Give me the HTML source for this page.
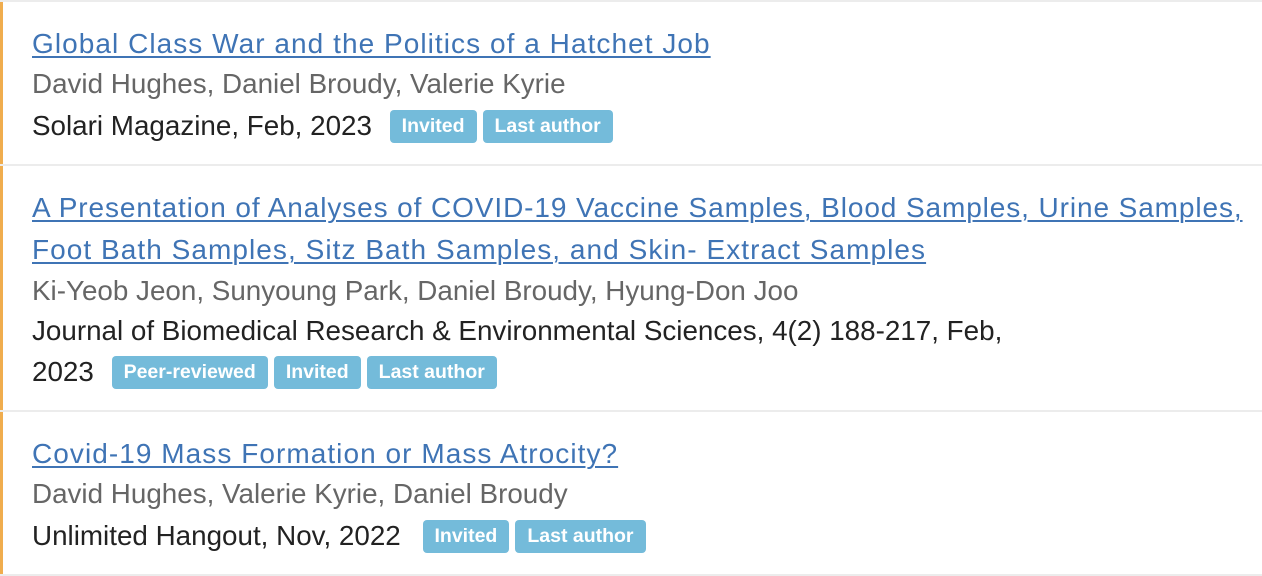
<!DOCTYPE html>
<html><head><meta charset="utf-8"><style>
body{margin:0;width:1262px;height:576px;background:#fff;position:relative;overflow:hidden;font-family:"Liberation Sans",Arial,sans-serif;}
.bar{position:absolute;left:0;width:3px;background:#f0ad4e;}
.sep{position:absolute;left:0;width:1262px;height:2px;background:#ececec;}
.l{position:absolute;left:32px;font-size:27.8px;white-space:nowrap;line-height:32px;}
.t{color:#3f74b5;font-size:28px;letter-spacing:1.05px;text-decoration:underline;text-decoration-thickness:2px;text-underline-offset:3px;}
.a{color:#666;}
.v{color:#222;}
.b{display:inline-block;background:#74bbda;color:#fff;font-weight:bold;font-size:19.5px;letter-spacing:0;line-height:33px;height:33px;padding:0 12px;border-radius:4px;vertical-align:top;margin-left:6px;}
</style></head><body>
<div class="sep" style="top:0"></div>
<div class="bar" style="top:2px;height:162px"></div>
<div class="l t" style="top:28px">Global Class War and the Politics of a Hatchet Job</div>
<div class="l a" style="top:68px">David Hughes, Daniel Broudy, Valerie Kyrie</div>
<div class="l v" style="top:110px">Solari Magazine, Feb, 2023 <span class="b" style="margin-left:10px">Invited</span><span class="b">Last author</span></div>
<div class="sep" style="top:164px"></div>
<div class="bar" style="top:166px;height:244px"></div>
<div class="l t" style="top:192px;letter-spacing:0.9px">A Presentation of Analyses of COVID-19 Vaccine Samples, Blood Samples, Urine Samples,</div>
<div class="l t" style="top:234px">Foot Bath Samples, Sitz Bath Samples, and Skin- Extract Samples</div>
<div class="l a" style="top:275px">Ki-Yeob Jeon, Sunyoung Park, Daniel Broudy, Hyung-Don Joo</div>
<div class="l v" style="top:315px">Journal of Biomedical Research &amp; Environmental Sciences, 4(2) 188-217, Feb,</div>
<div class="l v" style="top:356px">2023 <span class="b" style="margin-left:10px">Peer-reviewed</span><span class="b">Invited</span><span class="b">Last author</span></div>
<div class="sep" style="top:410px"></div>
<div class="bar" style="top:412px;height:162px"></div>
<div class="l t" style="top:438px">Covid-19 Mass Formation or Mass Atrocity?</div>
<div class="l a" style="top:478px">David Hughes, Valerie Kyrie, Daniel Broudy</div>
<div class="l v" style="top:520px">Unlimited Hangout, Nov, 2022 <span class="b" style="margin-left:14px">Invited</span><span class="b">Last author</span></div>
<div class="sep" style="top:574px"></div>
</body></html>
